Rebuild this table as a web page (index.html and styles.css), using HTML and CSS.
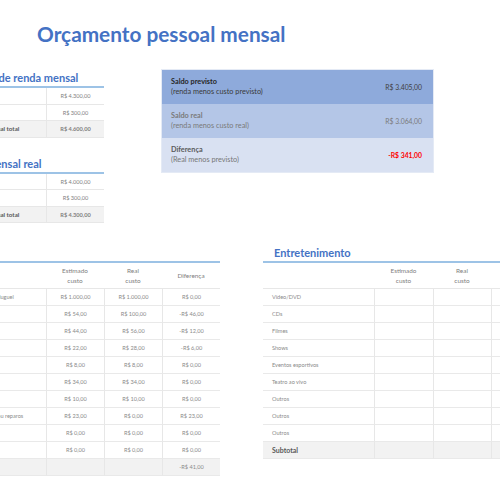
FILE: index.html
```html
<!DOCTYPE html>
<html lang="pt-BR">
<head>
<meta charset="utf-8">
<title>Orçamento pessoal mensal</title>
<link rel="stylesheet" href="styles.css">
</head>
<body>
<div class="page">
  <h1 class="title">Orçamento pessoal mensal</h1>

  <div class="top">
    <div class="income">
      <section class="mini">
        <h2 class="sec-head">Projeção de renda mensal</h2>
        <div class="mrow"><span class="lbl">Renda 1</span><span class="val">R$ 4.300,00</span></div>
        <div class="mrow"><span class="lbl">Renda extra</span><span class="val">R$ 300,00</span></div>
        <div class="mrow total"><span class="lbl">Renda mensal total</span><span class="val">R$ 4.600,00</span></div>
      </section>
      <section class="mini second">
        <h2 class="sec-head">Renda mensal real</h2>
        <div class="mrow"><span class="lbl">Renda 1</span><span class="val">R$ 4.000,00</span></div>
        <div class="mrow"><span class="lbl">Renda extra</span><span class="val">R$ 300,00</span></div>
        <div class="mrow total"><span class="lbl">Renda mensal total</span><span class="val">R$ 4.300,00</span></div>
      </section>
    </div>

    <div class="summary">
      <div class="srow s1">
        <div class="sl"><b>Saldo previsto</b><span>(renda menos custo previsto)</span></div>
        <div class="sv">R$ 3.405,00</div>
      </div>
      <div class="srow s2">
        <div class="sl"><b>Saldo real</b><span>(renda menos custo real)</span></div>
        <div class="sv">R$ 3.064,00</div>
      </div>
      <div class="srow s3">
        <div class="sl"><b>Diferença</b><span>(Real menos previsto)</span></div>
        <div class="sv neg">-R$ 341,00</div>
      </div>
    </div>
  </div>

  <div class="bottom">
    <section class="tbl housing">
      <h2 class="sec-head">Moradia</h2>
      <div class="grid">
        <div class="th lbl"></div><div class="th">Estimado<br>custo</div><div class="th">Real<br>custo</div><div class="th">Diferença</div>
        <div class="td lbl">Hipoteca ou aluguel</div><div class="td">R$ 1.000,00</div><div class="td">R$ 1.000,00</div><div class="td">R$ 0,00</div>
        <div class="td lbl">Telefone</div><div class="td">R$ 54,00</div><div class="td">R$ 100,00</div><div class="td">-R$ 46,00</div>
        <div class="td lbl">Eletricidade</div><div class="td">R$ 44,00</div><div class="td">R$ 56,00</div><div class="td">-R$ 12,00</div>
        <div class="td lbl">Gás</div><div class="td">R$ 22,00</div><div class="td">R$ 28,00</div><div class="td">-R$ 6,00</div>
        <div class="td lbl">Água e esgoto</div><div class="td">R$ 8,00</div><div class="td">R$ 8,00</div><div class="td">R$ 0,00</div>
        <div class="td lbl">TV a cabo</div><div class="td">R$ 34,00</div><div class="td">R$ 34,00</div><div class="td">R$ 0,00</div>
        <div class="td lbl">Coleta de lixo</div><div class="td">R$ 10,00</div><div class="td">R$ 10,00</div><div class="td">R$ 0,00</div>
        <div class="td lbl">Manutenção ou reparos</div><div class="td">R$ 23,00</div><div class="td">R$ 0,00</div><div class="td">R$ 23,00</div>
        <div class="td lbl">Suprimentos</div><div class="td">R$ 0,00</div><div class="td">R$ 0,00</div><div class="td">R$ 0,00</div>
        <div class="td lbl">Outros</div><div class="td">R$ 0,00</div><div class="td">R$ 0,00</div><div class="td">R$ 0,00</div>
        <div class="td lbl sub">Subtotal</div><div class="td sub"></div><div class="td sub"></div><div class="td sub">-R$ 41,00</div>
      </div>
    </section>

    <section class="tbl ent">
      <h2 class="sec-head">Entretenimento</h2>
      <div class="grid">
        <div class="th lbl"></div><div class="th">Estimado<br>custo</div><div class="th">Real<br>custo</div><div class="th">Diferença</div>
        <div class="td lbl">Vídeo/DVD</div><div class="td"></div><div class="td"></div><div class="td"></div>
        <div class="td lbl">CDs</div><div class="td"></div><div class="td"></div><div class="td"></div>
        <div class="td lbl">Filmes</div><div class="td"></div><div class="td"></div><div class="td"></div>
        <div class="td lbl">Shows</div><div class="td"></div><div class="td"></div><div class="td"></div>
        <div class="td lbl">Eventos esportivos</div><div class="td"></div><div class="td"></div><div class="td"></div>
        <div class="td lbl">Teatro ao vivo</div><div class="td"></div><div class="td"></div><div class="td"></div>
        <div class="td lbl">Outros</div><div class="td"></div><div class="td"></div><div class="td"></div>
        <div class="td lbl">Outros</div><div class="td"></div><div class="td"></div><div class="td"></div>
        <div class="td lbl">Outros</div><div class="td"></div><div class="td"></div><div class="td"></div>
        <div class="td lbl sub">Subtotal</div><div class="td sub"></div><div class="td sub"></div><div class="td sub"></div>
      </div>
    </section>
  </div>
</div>
</body>
</html>
```

FILE: styles.css
```css
* { box-sizing: border-box; margin: 0; padding: 0; }

html, body {
  width: 500px;
  height: 500px;
  overflow: hidden;
  background: #fff;
}

body {
  font-family: Lato, "Liberation Sans", sans-serif;
  color: #7f7f7f;
}

.page {
  width: 500px;
  height: 500px;
  overflow: hidden;
}

.title {
  height: 70px;
  padding: 21px 0 0 37px;
  font-size: 20.8px;
  line-height: 25px;
  font-weight: 700;
  color: #4472c4;
  white-space: nowrap;
}

.top {
  display: flex;
  align-items: flex-start;
  height: 170px;
}

.income {
  flex: none;
  width: 151px;
  margin-left: -47px;
}

.sec-head {
  height: 18px;
  font-size: 11px;
  line-height: 16px;
  font-weight: 700;
  color: #4472c4;
  white-space: nowrap;
  border-bottom: 2px solid #9dc3e6;
}

.mini.second { margin-top: 18px; }

.mrow {
  display: grid;
  grid-template-columns: 93px 58px;
  height: 16.5px;
  border-bottom: 1px solid #e7e7e7;
  font-size: 5.6px;
  line-height: 15.5px;
  white-space: nowrap;
}

.mrow .lbl { padding-left: 4px; overflow: hidden; }
.mrow .val { text-align: center; border-left: 1px solid #e7e7e7; }

.mrow.total { background: #f2f2f2; }
.mrow.total .lbl { font-weight: 700; color: #595959; font-size: 6.2px; padding-left: 14px; }
.mrow.total .val { font-weight: 700; color: #808080; }

.summary {
  flex: none;
  width: 271px;
  margin-left: 58px;
  outline: 1px solid #e4eaf5;
}

.srow {
  display: flex;
  align-items: center;
  justify-content: space-between;
  height: 34px;
  padding: 0 11px 0 9px;
  font-size: 6.8px;
  white-space: nowrap;
}

.sl {
  display: flex;
  flex-direction: column;
  font-size: 7.3px;
  line-height: 10px;
}

.s1 { background: #8eaadb; color: #262626; }
.s1 .sl span { color: #3a3a3a; }
.s1 .sv { color: #404040; }

.s2 { background: #b4c6e7; color: #7a7a7a; }
.s2 b { font-weight: 700; }

.s3 { background: #d9e1f2; color: #5a5a5a; }
.s3 .sl span { color: #777; }

.sv.neg { color: #ff0000; font-weight: 700; }

.bottom {
  display: flex;
  align-items: flex-start;
}

.tbl .sec-head {
  height: 23px;
  padding-top: 5px;
}

.housing {
  flex: none;
  width: 267px;
  margin-left: -47px;
}

.ent {
  flex: none;
  width: 286px;
  margin-left: 43px;
}

.ent .sec-head { padding-left: 11px; }

.grid {
  display: grid;
  grid-template-rows: 26px;
  grid-auto-rows: 17px;
  white-space: nowrap;
  font-size: 5.6px;
  line-height: 16px;
}

.housing .grid { grid-template-columns: 93px 58px 58px 58px; }
.ent .grid { grid-template-columns: 111px 59px 58px 58px; }

.th {
  display: flex;
  align-items: center;
  justify-content: center;
  text-align: center;
  font-size: 6.4px;
  line-height: 10px;
  color: #808080;
  border-bottom: 1px solid #e7e7e7;
}

.td {
  text-align: center;
  border-bottom: 1px solid #e9e9e9;
  border-left: 1px solid #e7e7e7;
  color: #8a8a8a;
}

.td.lbl {
  text-align: left;
  border-left: none;
  overflow: hidden;
}

.housing .td.lbl { padding-left: 12px; }
.ent .td.lbl { padding-left: 9px; }

.td.sub { background: #f2f2f2; }
.td.lbl.sub { font-weight: 700; font-size: 7px; color: #595959; }
```
